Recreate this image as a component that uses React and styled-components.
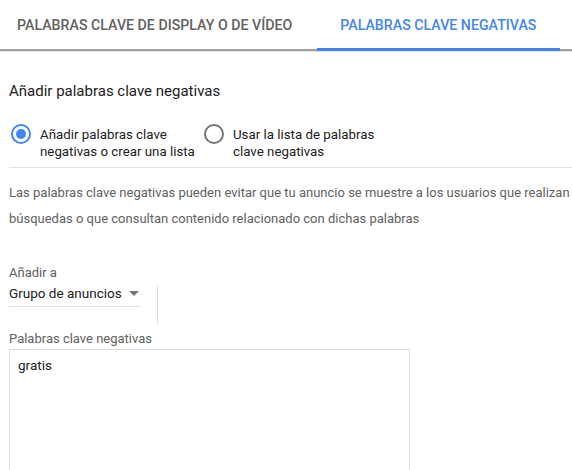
import React from "react"
import styled, { createGlobalStyle } from "styled-components"

const GlobalStyle = createGlobalStyle`
    body {
        margin: 0;
        background: #fff;
        font-family: Roboto, "Liberation Sans", sans-serif;
        color: #212121;
    }
`

const Page = styled.div`
    width: 572px;
    height: 470px;
    overflow: hidden;
`

const Tabs = styled.div`
    display: flex;
    height: 49px;
    border-bottom: 2px solid #9e9e9e;
    box-shadow: 0 1px 1px rgba(0, 0, 0, 0.1);
`

const Tab = styled.div`
    display: flex;
    align-items: center;
    padding: 2px ${p => p.right}px 0 ${p => p.left}px;
    height: 51px;
    margin-bottom: -2px;
    box-sizing: border-box;
    font-size: 14.2px;
    font-weight: 500;
    text-transform: uppercase;
    white-space: nowrap;
    color: ${p => (p.active ? "#4285f4" : "#616161")};
    border-bottom: 3px solid ${p => (p.active ? "#4285f4" : "transparent")};
`

const Body = styled.div`
    padding-left: 9px;
`

const Heading = styled.div`
    font-size: 15px;
    color: #212121;
    margin-top: 31px;
`

const RadioRow = styled.div`
    display: flex;
    align-items: flex-start;
    gap: 8px;
    padding: 26px 0 7px;
    border-bottom: 1px solid #e0e0e0;
`

const RadioOption = styled.label`
    display: flex;
    align-items: flex-start;
    gap: 9px;
    width: ${p => p.width}px;
    font-size: 13.3px;
    line-height: 17px;
    color: #212121;
    white-space: nowrap;
`

const Circle = styled.span`
    flex: none;
    width: 16px;
    height: 16px;
    border-radius: 50%;
    border: 2px solid ${p => (p.checked ? "#4285f4" : "#757575")};
    display: flex;
    align-items: center;
    justify-content: center;
    margin: -2px 0 0 2px;

    &::after {
        content: "";
        width: 10px;
        height: 10px;
        border-radius: 50%;
        background: ${p => (p.checked ? "#4285f4" : "transparent")};
    }
`

const Info = styled.p`
    margin: 12px 0 0;
    font-size: 13px;
    line-height: 26px;
    color: #616161;
    white-space: nowrap;
`

const FieldLabel = styled.div`
    font-size: 13px;
    color: #616161;
    margin-top: ${p => p.top}px;
`

const SelectRow = styled.div`
    display: flex;
    align-items: flex-start;
`

const Select = styled.div`
    display: flex;
    align-items: center;
    width: 132px;
    height: 26px;
    font-size: 13.5px;
    color: #212121;
    border-bottom: 1px solid #e0e0e0;
`

const Caret = styled.span`
    margin-left: 7px;
    width: 0;
    height: 0;
    border-left: 5px solid transparent;
    border-right: 5px solid transparent;
    border-top: 5px solid #757575;
`

const VRule = styled.div`
    width: 1px;
    height: 39px;
    margin: 6px 0 0 16px;
    background: #e0e0e0;
`

const TextArea = styled.div`
    margin-top: 3px;
    width: 401px;
    height: 140px;
    box-sizing: border-box;
    border: 1px solid #dcdcdc;
    padding: 7px 8px;
    font-size: 13.5px;
    color: #212121;
`

export default function App() {
    return (
        <Page>
            <GlobalStyle />
            <Tabs>
                <Tab left={17} right={25}>Palabras clave de display o de vídeo</Tab>
                <Tab left={23} right={24} active>Palabras clave negativas</Tab>
            </Tabs>
            <Body>
                <Heading>Añadir palabras clave negativas</Heading>
                <RadioRow>
                    <RadioOption width={185}>
                        <Circle checked />
                        <span>Añadir palabras clave<br />negativas o crear una lista</span>
                    </RadioOption>
                    <RadioOption width={220}>
                        <Circle />
                        <span>Usar la lista de palabras<br />clave negativas</span>
                    </RadioOption>
                </RadioRow>
                <Info>
                    Las palabras clave negativas pueden evitar que tu anuncio se muestre a los usuarios que realizan<br />
                    búsquedas o que consultan contenido relacionado con dichas palabras
                </Info>
                <FieldLabel top={33}>Añadir a</FieldLabel>
                <SelectRow>
                    <Select>
                        Grupo de anuncios
                        <Caret />
                    </Select>
                    <VRule />
                </SelectRow>
                <FieldLabel top={6}>Palabras clave negativas</FieldLabel>
                <TextArea>gratis</TextArea>
            </Body>
        </Page>
    )
}
